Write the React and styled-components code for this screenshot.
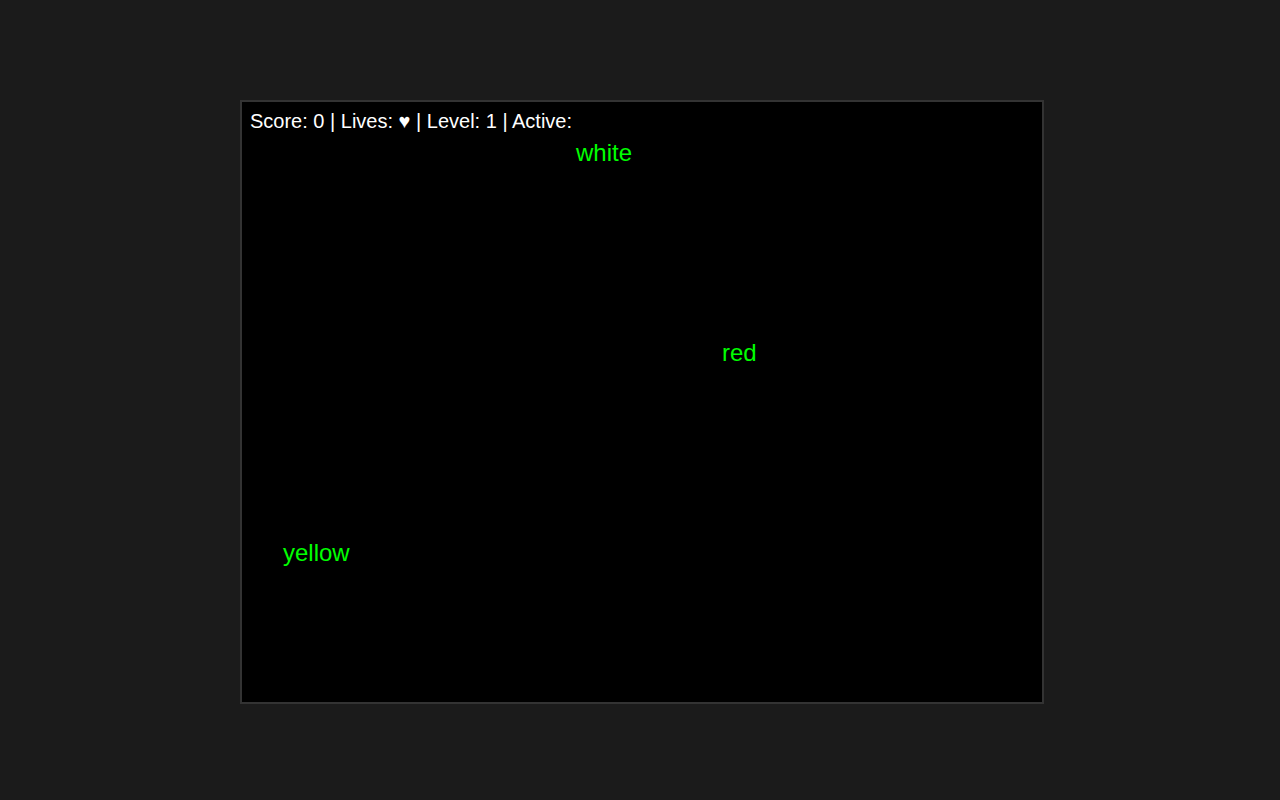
import styled, { createGlobalStyle } from 'styled-components';

const GlobalStyle = createGlobalStyle`
  html, body {
    margin: 0;
    padding: 0;
    background: #1b1b1b;
  }
  body {
    font-family: "Liberation Sans", Arial, sans-serif;
  }
`;

const words = [
  { text: 'white', x: 334, y: 39 },
  { text: 'red', x: 480, y: 239 },
  { text: 'yellow', x: 41, y: 439 },
];

const App = () => {
  return (
    <>
      <GlobalStyle />
      <Page>
        <Board>
          <Hud>Score: 0 | Lives: ♥ | Level: 1 | Active:</Hud>
          {words.map((w) => (
            <Word key={w.text} style={{ left: w.x, top: w.y }}>
              {w.text}
            </Word>
          ))}
        </Board>
      </Page>
    </>
  );
};

export default App;

const Page = styled.div`
  width: 1280px;
  height: 800px;
  box-sizing: border-box;
  padding: 100px 0 0 240px;
  display: flex;
  align-items: flex-start;
  background: #1b1b1b;
`;

const Board = styled.div`
  position: relative;
  width: 800px;
  height: 600px;
  background: #000;
  border: 2px solid #333;
  overflow: hidden;
`;

const Hud = styled.div`
  padding: 7px 8px;
  color: #fff;
  font-size: 20px;
  line-height: 24px;
`;

const Word = styled.span`
  position: absolute;
  color: #00ff00;
  font-size: 24px;
  line-height: 24px;
  white-space: nowrap;
`;
